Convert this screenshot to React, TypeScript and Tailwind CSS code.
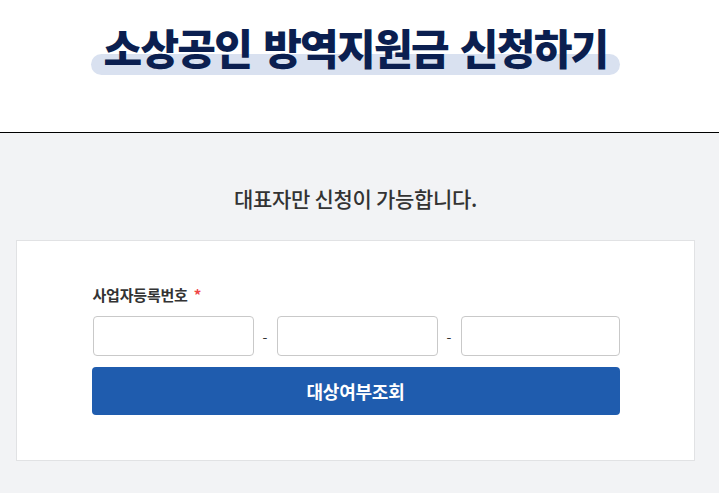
import React from "react";

export default function App() {
  const font = { fontFamily: '"Noto Sans CJK KR", "Noto Sans", sans-serif' };
  return (
    <div className="min-h-[493px] w-full bg-[#f2f3f5]" style={font}>
      <header className="border-b border-black bg-white">
        <div className="flex h-[132px] w-[711px] justify-center">
          <div className="relative mt-[19px] h-[56px]">
            <div className="absolute bottom-0 left-[-12px] right-[-12px] h-[21px] rounded-full bg-[#d9e1f0]" />
            <h1 className="relative text-[42px] font-black leading-[56px] tracking-[-1.7px] text-[#0b1f50] [word-spacing:4px]">
              소상공인 방역지원금 신청하기
            </h1>
          </div>
        </div>
      </header>
      <main className="flex w-[711px] flex-col items-center px-4">
        <p className="mt-[50px] text-[21px] font-medium leading-[30px] tracking-[-0.3px] text-[#333333]">
          대표자만 신청이 가능합니다.
        </p>
        <section className="mt-[27px] flex w-full justify-center border border-[#e1e2e4] bg-white pb-[45px] pt-[44px]">
          <div className="w-[528px]">
            <label className="flex items-center gap-[6px] pl-px text-[15px] font-bold leading-[20px] tracking-[-0.2px] text-[#333333]">
              사업자등록번호 <span className="text-[#ef4747]">*</span>
            </label>
            <div className="mt-[11px] flex items-center pl-px">
              <input className="h-[40px] w-[161px] rounded-[4px] border border-[#c9c9c9] bg-white" />
              <span className="flex w-[23px] justify-center text-[14px] text-[#333]">-</span>
              <input className="h-[40px] w-[161px] rounded-[4px] border border-[#c9c9c9] bg-white" />
              <span className="flex w-[23px] justify-center text-[14px] text-[#333]">-</span>
              <input className="h-[40px] w-[159px] rounded-[4px] border border-[#c9c9c9] bg-white" />
            </div>
            <button className="mt-[11px] flex h-[48px] w-full items-center justify-center rounded-[4px] bg-[#1f5cae] text-[18px] font-bold tracking-[-0.2px] text-white">
              대상여부조회
            </button>
          </div>
        </section>
      </main>
    </div>
  );
}
